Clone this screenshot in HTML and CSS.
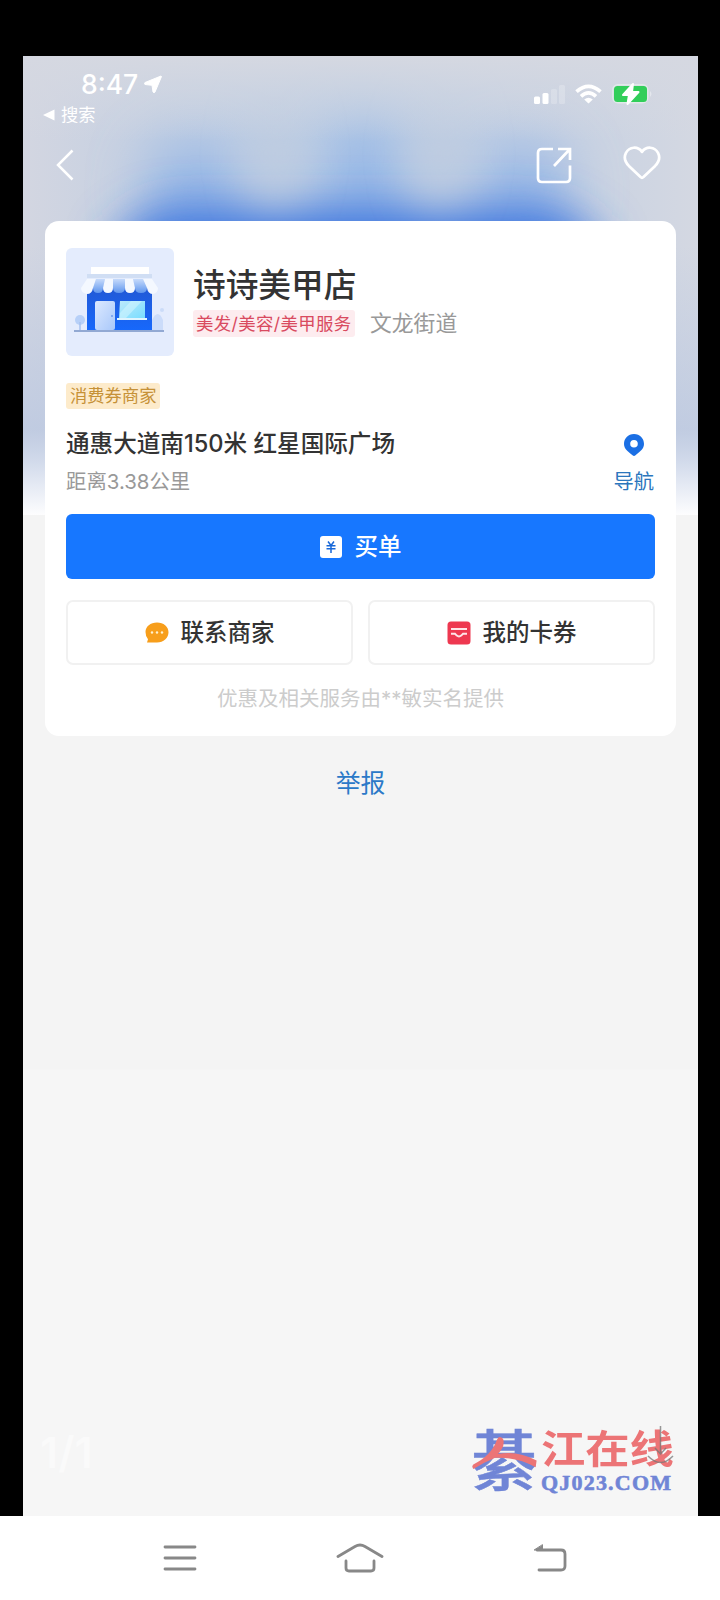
FILE: index.html
```html
<!DOCTYPE html>
<html lang="zh-CN">
<head>
<meta charset="utf-8">
<title>诗诗美甲店</title>
<link rel="stylesheet" href="styles.css">
</head>
<body>
<main class="screen">
  <svg class="hero" viewBox="0 0 675 459" preserveAspectRatio="none" aria-hidden="true">
    <defs>
      <linearGradient id="sky" x1="0" y1="0" x2="1" y2="0">
        <stop offset="0" stop-color="#d3d6e1"/><stop offset=".2" stop-color="#c3cfe2"/><stop offset=".5" stop-color="#b8cbe4"/><stop offset=".8" stop-color="#c7d1e2"/><stop offset="1" stop-color="#d4d8e2"/>
      </linearGradient>
      <linearGradient id="top" x1="0" y1="0" x2="0" y2="1">
        <stop offset="0" stop-color="#d5d8e1"/><stop offset="1" stop-color="#d5d8e1" stop-opacity="0"/>
      </linearGradient>
      <linearGradient id="low" x1="0" y1="0" x2="0" y2="1">
        <stop offset="0" stop-color="#b9c7e1" stop-opacity="0"/><stop offset=".68" stop-color="#b9c7e1" stop-opacity=".7"/><stop offset=".84" stop-color="#dae1ef"/><stop offset="1" stop-color="#fdfdfe"/>
      </linearGradient>
      <filter id="b1" x="-80%" y="-80%" width="260%" height="260%"><feGaussianBlur stdDeviation="23"/></filter>
      <filter id="b2" x="-80%" y="-80%" width="260%" height="260%"><feGaussianBlur stdDeviation="30"/></filter>
    </defs>
    <rect width="675" height="459" fill="url(#sky)"/>
    <g filter="url(#b2)" fill="#8fb3e7">
      <ellipse cx="172" cy="134" rx="44" ry="44"/><ellipse cx="342" cy="126" rx="34" ry="56"/><ellipse cx="500" cy="134" rx="40" ry="44"/>
    </g>
    <path d="M92 250v-66l44-30h396l44 30v66Z" fill="#3671df" filter="url(#b1)"/>
    <g filter="url(#b1)" fill="#bfcce0">
      <ellipse cx="252" cy="98" rx="22" ry="52"/><ellipse cx="416" cy="98" rx="23" ry="52"/>
    </g>
    <rect width="675" height="85" fill="url(#top)"/>
    <rect y="190" width="675" height="269" fill="url(#low)"/>
  </svg>

  <header class="status">
    <div class="status-left">
      <div class="clock">8:47
        <svg width="18" height="18" viewBox="0 0 18 18"><path d="M17 1 1 7.500q-1.500 1.200 0 2l7 .8 1 6.700q1 1.300 2 0L17.500 1.500Z" fill="#fff" stroke="#fff" stroke-linejoin="round"/></svg>
      </div>
      <div class="return"><svg width="12" height="12" viewBox="0 0 12 12"><path d="M0 6 11.500.5v11Z" fill="#fff"/></svg>搜索</div>
    </div>
    <div class="status-right">
      <svg width="32" height="20" viewBox="0 0 32 20" fill="#fff"><rect y="12.500" width="6" height="7.500" rx="1.500"/><rect x="8.500" y="9" width="6" height="11" rx="1.500"/><g opacity=".22"><rect x="17" y="5" width="6" height="15" rx="1.500"/><rect x="25" y="1" width="6" height="19" rx="1.500"/></g></svg>
      <svg class="wifi" width="27" height="20" viewBox="0 0 27 20" fill="none" stroke="#fff" stroke-width="3.700"><path d="M1.500 7.700Q13.500-3 25.500 7.700"/><path d="M6 12.300Q13.500 5.500 21 12.300"/><path d="m9.200 15.500q4.300-3.700 8.600 0L13.500 19.500Z" fill="#fff" stroke="none"/></svg>
      <svg class="battery" width="42" height="24" viewBox="0 0 42 24"><rect x=".8" y="2.800" width="35" height="18" rx="5" fill="none" stroke="#e8f5ec" stroke-opacity=".65" stroke-width="1.400"/><rect x="2" y="4" width="33" height="16" rx="3.500" fill="#32ce5a"/><path d="M38 9q3 3 0 6Z" fill="#fff" opacity=".4"/><path d="m21 2-10 11h6l-1.500 9 11-12h-6.500Z" fill="#fff" stroke="#fff" stroke-width="2" stroke-linejoin="round"/></svg>
    </div>
  </header>

  <nav class="topbar">
    <svg width="18" height="32" viewBox="0 0 18 32" fill="none" stroke="#fff" stroke-width="2.500"><path d="M16.500 1.500 2 16l14.500 14.500"/></svg>
    <span class="tools">
      <svg width="36" height="37" viewBox="0 0 36 37" fill="none" stroke="#fff" stroke-width="2.700"><path d="M17 2H6Q2 2 2 6v25q0 4 4 4h24q4 0 4-4V18.500"/><path d="M22 2h12v11M34 2 18 19"/></svg>
      <svg class="heart" width="38" height="34" viewBox="0 0 39 35" fill="none" stroke="#fff" stroke-width="2.800" stroke-linejoin="round"><path d="M19.500 6C15-.2 6.500.7 3 7c-2.600 5-.6 9.700 3 13.500L18 32q1.500 1.300 3 0l12-11.500c3.600-3.800 5.600-8.500 3-13.500-3.500-6.300-12-7.200-16.500-1Z"/></svg>
    </span>
  </nav>

  <section class="card">
    <div class="shop">
      <svg class="logo" viewBox="0 0 108 108">
        <defs>
          <linearGradient id="wall" x1="0" y1="0" x2="0" y2="1"><stop stop-color="#2259d6"/><stop offset="1" stop-color="#1768fb"/></linearGradient>
          <linearGradient id="aw" x1="0" y1="0" x2="0" y2="1"><stop stop-color="#c6dafb"/><stop offset="1" stop-color="#5f96ee"/></linearGradient>
          <linearGradient id="door" x1="0" y1="0" x2="1" y2="1"><stop stop-color="#dce9ff"/><stop offset="1" stop-color="#a9c8fa"/></linearGradient>
          <linearGradient id="glass" x1="0" y1="0" x2="1" y2="1"><stop stop-color="#bdeafb"/><stop offset="1" stop-color="#79ddff"/></linearGradient>
        </defs>
        <rect width="108" height="108" rx="6" fill="#e4ecfd"/>
        <rect x="25" y="19" width="58" height="8" fill="#fff"/><rect x="21" y="26" width="65" height="4" fill="#d0def4"/>
        <circle cx="14" cy="72" r="5" fill="#b7d0f8"/><path d="M14 74v8" stroke="#a4c1ef" stroke-width="1.500"/>
        <path d="M86 82V72q6-12 11 0v10Z" fill="#cbdcfa"/><circle cx="96" cy="62" r="2" fill="#cbdcf8"/>
        <rect x="21" y="40" width="65" height="42" fill="url(#wall)"/>
        <path d="M21 31h9l-3 9q-1 6-6 6-6-1-6-6ZM39 31h8v9q0 5-5 5t-5-5ZM59 31h8l2 9q0 5-5 5t-5-5ZM77 31h9l6 9q0 5-5 6-5 0-6-6Z" fill="#f4f8ff"/>
        <path d="M30 31h9l-2 9q0 5-5 5t-5-5ZM47 31h12v9q0 5-6 5t-6-5ZM67 31h10l4 9q0 5-6 5t-6-5Z" fill="url(#aw)"/>
        <rect x="29" y="53" width="20" height="29" rx="2" fill="url(#door)"/><circle cx="46" cy="68" r="1" fill="#6d9bee"/>
        <path d="M54 53h25v17H53Z" fill="url(#glass)"/><path d="m54 65 11-12h11L60 70h-6Z" fill="#d5f6ff" opacity=".55"/><path d="M51 70h30v2H51Z" fill="#dff4ff"/>
        <path d="M8 83h90" stroke="#92a9d3" stroke-width="2"/>
      </svg>
      <div class="shop-info">
        <h1 class="name">诗诗美甲店</h1>
        <div class="meta"><span class="category">美发/美容/美甲服务</span><span class="street">文龙街道</span></div>
      </div>
    </div>
    <span class="voucher">消费券商家</span>
    <div class="place">
      <div><p class="address">通惠大道南150米 红星国际广场</p><p class="distance">距离3.38公里</p></div>
      <a class="navigate"><svg width="20" height="22" viewBox="0 0 20 22"><path fill="#1b6fe4" fill-rule="evenodd" d="M10 0C4 0 0 4.500 0 10c0 5 4.500 8 8.500 11.300q1.500 1.200 3 0C15.500 18 20 15 20 10 20 4.500 16 0 10 0Zm0 6a3.800 3.800 0 1 1 0 7.600A3.800 3.800 0 0 1 10 6Z"/></svg><span>导航</span></a>
    </div>
    <a class="pay"><svg width="22" height="22" viewBox="0 0 22 22"><rect width="22" height="22" rx="3" fill="#fff"/><path d="m8 5.500 3 4 3-4M6.500 9.800h9M6.500 12.800h9M11 9.500v7.500" fill="none" stroke="#1767d8" stroke-width="1.500"/></svg><span>买单</span></a>
    <div class="actions">
      <a class="action"><svg width="24" height="22" viewBox="0 0 24 22"><path d="M12 .5C5.500.5.500 4.500.500 10q0 4.500 2.500 7.200L2 20.500h10c6.500 0 11.500-4.500 11.500-10.200S18.500.5 12 .5Z" fill="#f79e1b"/><g fill="#fff1ce"><circle cx="7" cy="10.500" r="1.200"/><circle cx="12" cy="10.500" r="1.200"/><circle cx="17" cy="10.500" r="1.200"/></g></svg><span>联系商家</span></a>
      <a class="action"><svg width="24" height="24" viewBox="0 0 24 24"><rect x=".5" y=".5" width="23" height="23" rx="3.500" fill="#ee3850"/><path d="M4 8h16M4 12.800h4l1.800 1.800q2.200 1.800 4.400 0l1.800-1.800h4" fill="none" stroke="#ffe5e8" stroke-width="1.900"/></svg><span>我的卡券</span></a>
    </div>
    <p class="provider">优惠及相关服务由**敏实名提供</p>
  </section>
  <a class="report">举报</a>

  <footer class="viewer">
    <span class="count">1/1</span>
    <div class="brand">
      <div class="brand-mark">綦<svg viewBox="0 0 68 36"><path d="M28 0q6 0 5 7 0 5-6 11 21-4 41 7l-1 7Q47 21 24 22 12 27 1 34q-2-3 0-5Q20 20 26 3Z" fill="#ec7476"/></svg></div>
      <div class="brand-text"><span class="brand-cn">江在线</span><span class="brand-en">QJ023.COM</span></div>
      <svg class="download" width="27" height="40" viewBox="0 0 27 40" fill="none" stroke="#777" stroke-opacity=".75" stroke-width="1.500"><path d="M13.500 0v28M8 22l5.500 6 5.500-6M1 30q12.500 13 25 0"/></svg>
    </div>
  </footer>
</main>
<nav class="system">
  <svg width="34" height="26" viewBox="0 0 34 26" fill="none" stroke="#888" stroke-width="2.800" stroke-linecap="round"><path d="M2 2h30M2 13h30M2 24h30"/></svg>
  <svg class="home" width="48" height="30" viewBox="0 0 48 30" fill="none" stroke="#888" stroke-width="2.800" stroke-linecap="round"><path d="m2 13.500 17-10q5-3 10 0l17 10M10 18v7q0 3 3 3h22q3 0 3-3v-7"/></svg>
  <svg class="back" width="34" height="28" viewBox="0 0 34 28" fill="none" stroke="#888" stroke-width="2.800" stroke-linecap="round"><path d="M4 6h24q4 0 4 4v12q0 4-4 4H6"/><path d="M9.500 1v5H1.500Z" fill="#888" stroke-width="1"/></svg>
</nav>
</body>
</html>
```
FILE: styles.css
```css
* { box-sizing: border-box; }
body {
  margin: 0;
  width: 720px;
  height: 1600px;
  padding-top: 56px;
  background: #000;
  font-family: Inter, "Noto Sans CJK SC", sans-serif;
  overflow: hidden;
}
h1, p { margin: 0; }
svg { display: block; flex: none; }
.screen {
  position: relative;
  display: flex;
  flex-direction: column;
  width: 675px;
  height: 1460px;
  margin-left: 23px;
  background: linear-gradient(#f4f4f4 1013px, #f6f6f6 1014px);
}
.hero { position: absolute; top: 0; left: 0; width: 675px; height: 459px; }
.status {
  position: relative;
  display: flex;
  justify-content: space-between;
  height: 74px;
  padding: 12px 44px 0 20px;
  color: #fff;
}
.clock {
  display: flex;
  align-items: center;
  gap: 6px;
  padding-left: 38px;
  font-size: 26.500px;
  font-weight: 500;
  line-height: 32px;
}
.return {
  display: flex;
  align-items: center;
  gap: 6px;
  margin-top: 3px;
  font-size: 17.300px;
  line-height: 24px;
}
.status-right { display: flex; align-items: center; height: 52px; }
.wifi { margin-left: 9px; }
.battery { margin-left: 10px; }
.topbar {
  position: relative;
  display: flex;
  align-items: center;
  justify-content: space-between;
  height: 70px;
  padding: 0 37px 0 33px;
}
.tools { display: flex; gap: 51px; }
.heart { margin-top: -1px; }
.card {
  position: relative;
  height: 515px;
  margin: 21px 22px 0;
  padding: 27px 21px 0;
  border-radius: 14px;
  background: #fff;
  color: #333;
}
.shop { display: flex; gap: 19px; }
.logo { width: 108px; height: 108px; }
.shop-info { padding-top: 15px; }
.name { font-size: 32.700px; font-weight: 500; line-height: 44px; }
.meta { display: flex; align-items: center; gap: 15px; margin-top: 1px; }
.category {
  width: 162px;
  padding-left: 3px;
  border-radius: 3px;
  background: #fdecef;
  color: #d94a60;
  font-size: 17.400px;
  letter-spacing: .4px;
  line-height: 27px;
  white-space: nowrap;
}
.street { color: #999; font-size: 21.800px; line-height: 30px; }
.voucher {
  display: block;
  width: 94px;
  margin-top: 27px;
  padding-left: 4px;
  border-radius: 3px;
  background: #fdebcb;
  color: #c69137;
  font-size: 17.300px;
  line-height: 26px;
}
.place { display: flex; justify-content: space-between; margin-top: 17px; }
.address { font-size: 23.600px; font-weight: 500; line-height: 36px; white-space: nowrap; }
.distance { margin-top: 5px; color: #999; font-size: 20.400px; line-height: 30px; }
.navigate {
  display: flex;
  flex-direction: column;
  align-items: center;
  margin-right: 1px;
  padding-top: 8px;
  color: #2b76bd;
  font-size: 20.300px;
  line-height: 30px;
}
.navigate span { margin-top: 11px; }
.pay {
  display: flex;
  align-items: center;
  justify-content: center;
  gap: 13px;
  height: 65px;
  margin-top: 17px;
  border-radius: 6px;
  background: #1777ff;
  color: #fff;
  font-size: 23.500px;
  font-weight: 500;
}
.pay span, .action span { padding-bottom: 3px; }
.actions { display: flex; gap: 15px; margin-top: 21px; }
.action {
  display: flex;
  flex: 1;
  align-items: center;
  justify-content: center;
  gap: 12px;
  height: 65px;
  border: 2px solid #f1f1f1;
  border-radius: 7px;
  font-size: 23.500px;
  font-weight: 500;
}
.provider { margin-top: 19px; color: #ccc; font-size: 20.500px; line-height: 30px; text-align: center; }
.report {
  position: relative;
  margin-top: 28px;
  color: #2b79c8;
  font-size: 24.800px;
  line-height: 38px;
  text-align: center;
}
.viewer {
  display: flex;
  justify-content: space-between;
  margin-top: auto;
  padding: 0 23px 22px 17px;
  height: 114px;
}
.count { padding-top: 28px; color: #fafafa; font-size: 43px; font-weight: 600; line-height: 44px; }
.brand { position: relative; display: flex; gap: 4px; height: 92px; padding-top: 24px; }
.brand-mark {
  position: relative;
  width: 66px;
  height: 66px;
  color: #7085d6;
  font-size: 66px;
  font-weight: 500;
  line-height: 70px;
  -webkit-text-stroke: .5px #7085d6;
}
.brand-mark svg { position: absolute; left: 0; top: 11px; width: 67px; height: 34px; }
.brand-text { display: flex; flex-direction: column; width: 134px; padding-top: 2px; }
.brand-cn {
  height: 43px;
  color: #ec7476;
  font-size: 44.300px;
  font-weight: 700;
  line-height: 43px;
  white-space: nowrap;
  transform: scaleY(.86);
}
.brand-en {
  color: #7085d6;
  font-family: "Liberation Serif", serif;
  font-size: 22px;
  font-weight: 700;
  letter-spacing: 1.200px;
  line-height: 23px;
  -webkit-text-stroke: .6px #7085d6;
}
.download { position: absolute; top: 24px; right: 1px; }
.system {
  display: flex;
  align-items: center;
  height: 84px;
  padding-left: 163px;
  background: #fff;
}
.home { margin-left: 139px; }
.back { margin-left: 149px; }
```
